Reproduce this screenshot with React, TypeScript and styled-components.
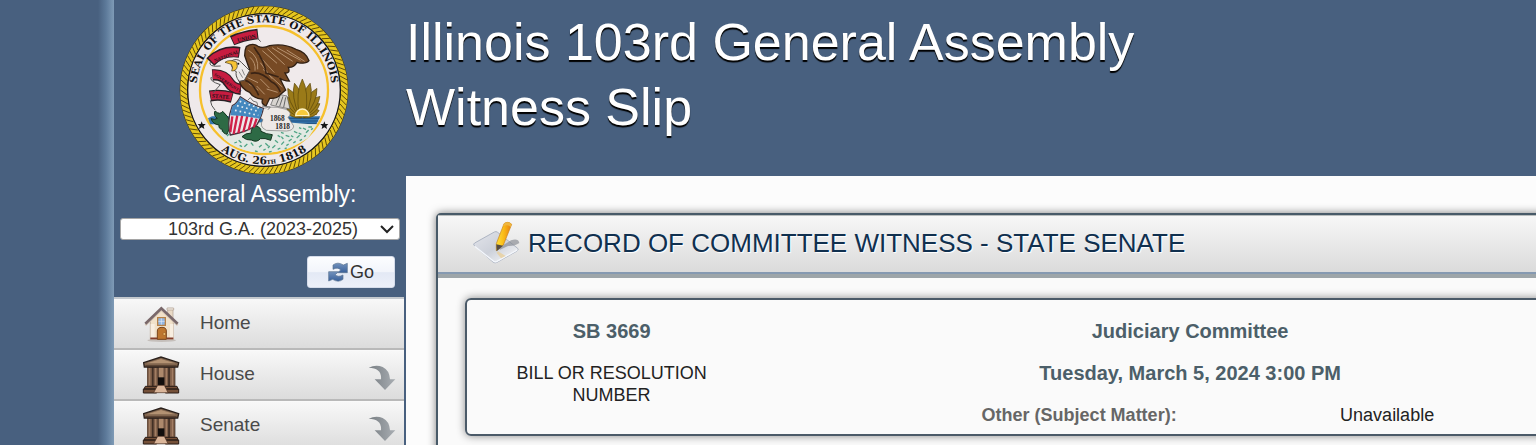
import React from "react";
import styled, { createGlobalStyle } from "styled-components";

const GlobalStyle = createGlobalStyle`
  *, *::before, *::after { box-sizing: border-box; }
  body {
    margin: 0;
    background: #48607f;
    color: #222;
    font-family: "Liberation Sans", Arial, sans-serif;
    font-size: 18px;
    line-height: 22px;
  }
`;

const Page = styled.div`
  display: flex;
  height: 100vh;
  overflow: hidden;
`;

const Gutter = styled.div`
  flex: 0 0 114px;
  background: linear-gradient(to right, #48607f 86%, #5d7a9a 93%, #7f9bb6 100%);
`;

const Sidebar = styled.aside`
  flex: 0 0 292px;
  display: flex;
  flex-direction: column;
`;

const SealLink = styled.a`
  display: flex;
  justify-content: center;
  padding: 5px 0 0 8px;
`;

const SessionForm = styled.form`
  display: flex;
  flex-direction: column;
  padding: 5px 6px 9px;
`;

const SessionLabel = styled.label`
  color: #fff;
  font-size: 23px;
  line-height: 28px;
  text-align: center;
`;

const SelectWrap = styled.div`
  display: grid;
  align-items: center;
  margin-top: 10px;
  > * { grid-area: 1 / 1; }
  > svg { justify-self: end; margin-right: 5px; pointer-events: none; }
`;

const SessionSelect = styled.select`
  width: 100%;
  height: 22px;
  padding: 0 12px 0 18px;
  border: 1px solid #a5a5a5;
  border-radius: 3px;
  appearance: none;
  background: #fff;
  color: #333;
  font: inherit;
  line-height: 20px;
  text-align: center;
  text-align-last: center;
`;

const GoButton = styled.button`
  display: flex;
  align-items: center;
  align-self: flex-end;
  justify-content: center;
  gap: 2px;
  width: 88px;
  height: 32px;
  margin: 16px 5px 0 0;
  padding: 0;
  border: 1px solid #d5dcea;
  border-radius: 3px;
  background: linear-gradient(#fcfdff, #f2f5fb 50%, #e3e9f5 52%, #ecf0f9);
  color: #333;
  font: inherit;
`;

const Menu = styled.nav`
  display: flex;
  flex-direction: column;
  margin-right: 2px;
`;

const MenuLink = styled.a`
  display: flex;
  flex: none;
  align-items: center;
  height: 51px;
  padding: 0 8px 0 28px;
  border-top: 1px solid #fafafa;
  border-bottom: 2px solid #b9b9b9;
  background: linear-gradient(#f8f8f8, #dcdcdc);
  color: #4a4a4a;
  font-size: 19px;
  text-decoration: none;
  &:first-child { height: 53px; border-top: 2px solid #c4c9ce; }
`;

const MenuText = styled.span`
  flex: 1;
  margin-left: 20px;
  padding-bottom: 2px;
`;

const Main = styled.main`
  display: flex;
  flex: 1;
  flex-direction: column;
  min-width: 0;
`;

const Banner = styled.header`
  flex: none;
  height: 176px;
  padding-top: 10px;
`;

const Title = styled.h1`
  margin: 0;
  color: #fff;
  font-size: 52px;
  font-weight: 400;
  line-height: 65px;
  text-shadow: 0 2px 1px #000;
`;

const Content = styled.div`
  flex: 1;
  min-height: 300px;
  padding: 37px 0 0 30px;
  background: #fcfcfc;
`;

const Panel = styled.section`
  min-height: 400px;
  margin-right: -120px;
  border: 2px solid #485a68;
  border-radius: 5px;
  background: #fafafa;
  box-shadow: 0 0 8px rgba(0, 0, 0, 0.5);
`;

const PanelHeader = styled.div`
  display: flex;
  align-items: center;
  gap: 8px;
  height: 63px;
  padding: 0 35px 5px;
  border-top: 1px solid #b9bdbd;
  border-bottom: 4px solid #9da5a9;
  background: linear-gradient(#f7f7f7, #dadada);
  box-shadow: inset 0 -2px 0 #8599b1;
`;

const PanelTitle = styled.h2`
  margin: 0;
  color: #10304f;
  font-size: 26px;
  font-weight: 400;
  line-height: 32px;
  text-shadow: 1px 1px 1px #fff;
`;

const BillCard = styled.div`
  display: grid;
  grid-template-columns: 1fr 3fr;
  margin: 20px 28px 0 27px;
  min-height: 138px;
  padding: 20px 0 8px;
  border: 2px solid #4b5a68;
  border-radius: 6px;
  box-shadow: 0 0 8px rgba(0, 0, 0, 0.45);
  text-align: center;
`;

const Column = styled.div`
  display: flex;
  flex-direction: column;
  align-items: center;
  gap: 20px;
`;

const Strong = styled.h3`
  margin: 0;
  color: #4c5f69;
  font-size: 20px;
  line-height: 22px;
`;

const Caption = styled.p`
  width: 200px;
  margin: 0;
`;

const Hearing = styled.dl`
  display: grid;
  grid-template-columns: 308px 308px;
  margin: 0 0 0 86px;
`;

const HearingTerm = styled.dt`
  color: #666;
  font-weight: 700;
`;

const HearingValue = styled.dd`
  margin: 0;
`;

const CX = 285;
const CY = 269;

const ropeStrands = Array.from({ length: 104 }, (_, i) => {
  const a = (i / 104) * Math.PI * 2;
  const b = a + 0.06;
  return `M${CX + 232 * Math.cos(a)} ${CY + 232 * Math.sin(a)}L${CX + 251 * Math.cos(b)} ${CY + 251 * Math.sin(b)}`;
}).join("");

const leaves: [number, number][] = [
  [-76, 52], [76, 52], [-58, 62], [58, 62], [-44, 76], [44, 76],
  [-29, 90], [29, 90], [-14, 97], [14, 97], [0, 107],
];

const StateSeal = () => (
  <svg width="170" height="170" viewBox="30 14 510 510" role="img" aria-label="Seal of the State of Illinois">
    <defs>
      <path id="seal-top" d="M82 290V269A203 203 0 0 1 488 269V290" />
      <path id="seal-bottom" d="M62 269A223 223 0 0 0 508 269" />
    </defs>
    <circle cx={CX} cy={CY} r="253" fill="#40370f" />
    <circle cx={CX} cy={CY} r="241" fill="none" stroke="#e6c61f" strokeWidth="21" />
    <path d={ropeStrands} stroke="#5e4c08" strokeWidth="3" />
    <circle cx={CX} cy={CY} r="229" fill="#efe9ea" stroke="#171717" strokeWidth="4" />
    <circle cx={CX} cy={CY} r="192" fill="#f0eaeb" stroke="#f6c02c" strokeWidth="7" />
    <g fill="#111" fontFamily="'DejaVu Serif', serif" fontWeight="700" textAnchor="middle">
      <text fontSize="31"><textPath href="#seal-top" startOffset="50%">SEAL OF THE STATE OF ILLINOIS</textPath></text>
      <text fontSize="32"><textPath href="#seal-bottom" startOffset="50%">AUG. 26<tspan fontSize="17">TH</tspan> 1818</textPath></text>
    </g>
    <g fill="#151515">
      <path d="M98 363l3 8 9 0-6 6 2 9-8-5-8 5 2-9-6-6 9 0z" />
      <path d="M466 363l3 8 9 0-6 6 2 9-8-5-8 5 2-9-6-6 9 0z" />
    </g>

    <path d="M117 354l12-6h325l-12 24H124z" fill="#3576ae" />
    <path d="M352 354h99M350 362h98M351 369h92" stroke="#153f69" strokeWidth="2" />
    <path d="M358 344Q350 300 400 262Q452 300 443 344z" fill="#8a6c14" />
    <g transform="translate(400 343)" fill="#9a7a18" stroke="#5c4809" strokeWidth="2">
      {leaves.map(([angle, length]) => (
        <path
          key={angle}
          d={`M-10 0Q-20 ${-length * 0.65} 0 ${-length}Q20 ${-length * 0.65} 10 0z`}
          transform={`rotate(${angle})`}
        />
      ))}
    </g>
    <path d="M380 346a20 20 0 0 1 40 0z" fill="#f7ca3c" stroke="#fff3c2" strokeWidth="4" />

    <path d="M137 375Q285 358 444 373L418 412Q354 457 284 457Q205 455 166 417z" fill="#e2e9e3" />
    <path d="M158 390l7 5M174 407l6-6M209 420l8 7M226 439l9-8M246 427l7 9M270 441l8-7M289 429l9 8M310 443l9-8M318 420l9 7M337 433l8-9M350 405l11 4M359 423l9-7M375 393l10 5M383 413l9-8M402 383l9 5M411 397l8-8M418 380l11 0M300 455l8-2M258 452l8 2M343 416l-6-7M397 402l-8-4M366 406l7 4M326 447l8-4M196 428l8-3M212 435l7 4M283 450l7-4M297 443l5-6M326 405l8 5M336 396l8 3M352 436l7-5M373 428l7-5M392 421l7-4M390 382l7 3M405 409l6-4M426 388l6-4M347 445l6-2" stroke="#4fa485" strokeWidth="4" fill="none" />

    <path d="M255 337Q296 309 351 327Q373 338 357 351L374 377Q373 391 352 392L292 390Q268 379 282 358z" fill="#eee9e7" stroke="#777" strokeWidth="2" />
    <g fill="#252525" fontFamily="'Liberation Serif', serif" fontSize="22" fontWeight="700">
      <text x="303" y="363">1868</text>
      <text x="319" y="386">1818</text>
    </g>

    <path d="M174 402Q160 399 160 387Q148 386 150 374Q132 372 126 355Q138 360 145 354Q132 344 138 332Q153 345 161 333Q179 348 187 371z" fill="#2d6a45" stroke="#133520" strokeWidth="3" />
    <path d="M219 409Q229 398 247 398Q243 386 260 377Q276 380 276 393Q292 402 310 403L305 420Q287 412 274 415Q264 428 247 419Q232 421 219 409z" fill="#2d6a45" stroke="#133520" strokeWidth="3" />

    <g fill="none" strokeLinejoin="round">
      <path d="M189 121Q222 106 267 101" stroke="#282025" strokeWidth="31" />
      <path d="M192 121Q224 107 264 102" stroke="#c71c40" strokeWidth="23" />
      <path d="M124 185Q159 148 212 156" stroke="#282025" strokeWidth="33" />
      <path d="M127 182Q162 150 209 157" stroke="#c71c40" strokeWidth="25" />
      <path d="M130 224Q165 221 180 247Q191 265 216 267" stroke="#282025" strokeWidth="34" />
      <path d="M131 223Q166 221 181 247Q192 265 214 266" stroke="#c71c40" strokeWidth="26" />
      <path d="M123 287Q153 281 190 291" stroke="#282025" strokeWidth="33" />
      <path d="M125 286Q154 281 188 290" stroke="#c71c40" strokeWidth="25" />
      <path d="M124 184Q116 201 155 197M127 230Q119 242 154 253L132 278M124 300Q126 317 138 329M264 112L275 124" stroke="#555" strokeWidth="3" />
    </g>
    <g fill="#24141b" fontFamily="'Liberation Serif', serif" fontWeight="700" fontSize="17">
      <text transform="translate(206 126) rotate(-14)">UNION</text>
      <text fontSize="15" transform="translate(137 186) rotate(-21)">NATIONAL</text>
      <text fontSize="13" transform="translate(134 225) rotate(34)">SOVEREIGNTY</text>
      <text transform="translate(128 292) rotate(4)">STATE</text>
    </g>

    <path d="M319 280L354 287L363 326L305 314z" fill="#d8d4d0" stroke="#555" strokeWidth="2" />
    <path d="M321 315L333 286M332 318L342 288M344 321L350 291" stroke="#666" strokeWidth="3" />
    <path d="M232 139Q251 126 267 138Q282 145 302 136Q345 128 381 147Q411 155 420 181Q411 193 384 186Q375 202 358 201Q365 220 348 218L361 242Q343 242 332 233L350 269L335 282Q323 296 302 294L291 317Q275 311 281 297Q252 294 242 276Q216 265 211 242L214 221L242 208L227 166Q227 149 232 139z" fill="#774a24" stroke="#302014" strokeWidth="4" />
    <path d="M238 150Q270 168 266 207M243 171Q261 187 258 211M280 151L324 189M295 145L347 193M309 142L371 183M324 142L395 180M353 149L407 183M269 165L316 217M274 187L309 235M282 207L340 260M236 232L267 247M239 250L268 270M274 236L301 263M263 257L287 282M293 266L326 276" fill="none" stroke="#b7926f" strokeWidth="3" />
    <path d="M255 141Q288 184 291 218L329 230M245 219Q276 211 307 244Q325 251 334 275M229 240Q252 247 269 285" fill="none" stroke="#3b2415" strokeWidth="5" />
    <path d="M184 184Q203 170 217 186Q233 202 242 211L226 240L210 243Q198 225 202 214Q190 211 184 184z" fill="#eee9e7" stroke="#514e4b" strokeWidth="3" />
    <path d="M203 185Q180 176 168 186L187 192Q194 199 188 212Q203 212 205 198z" fill="#f6c333" stroke="#463617" strokeWidth="2" />
    <circle cx="208" cy="190" r="3" fill="#151515" />
    <path d="M210 214L221 232M219 207L227 225" stroke="#888" strokeWidth="3" />

    <path d="M214 289Q247 313 283 324Q279 346 264 373Q239 394 184 404Q172 360 190 316Q205 308 214 289z" fill="#eee8eb" stroke="#46353e" strokeWidth="4" />
    <path d="M190 348L184 395M205 345L194 401M220 344L208 399M235 347L223 395M249 351L239 389M263 355L254 381" stroke="#d02149" strokeWidth="7" />
    <path d="M214 291Q247 315 281 325Q279 340 272 355Q227 346 184 345Q185 330 191 317Q206 309 214 291z" fill="#4488bf" />
    <path d="M198 330L268 345M204 316L272 334M212 303L272 324" stroke="#e5edf2" strokeWidth="5" strokeDasharray="5 9" />
    <path d="M236 300l8-8 8 10 12 4 2 12M279 317l25 3-7 8" stroke="#777" strokeWidth="3" fill="none" />
  </svg>
);

const RefreshIcon = () => (
  <svg width="20" height="20" viewBox="0 0 60 60" aria-hidden="true">
    <defs>
      <linearGradient id="sync" x1="0" y1="0" x2="0" y2="1">
        <stop offset="0" stopColor="#7392bd" /><stop offset="1" stopColor="#38609a" />
      </linearGradient>
    </defs>
    <path d="M15 9Q29-2 46 9L58 4V32H29L38 24Q30 14 15 22z" fill="url(#sync)" stroke="#5b7290" strokeWidth="2" />
    <path d="M45 52Q31 63 14 52L2 57V29H31L22 38Q30 47 45 39z" fill="url(#sync)" stroke="#5b7290" strokeWidth="2" />
  </svg>
);

const ChevronIcon = () => (
  <svg width="16" height="12" viewBox="0 0 16 12" aria-hidden="true">
    <path d="M2 3l6 6 6-6" fill="none" stroke="#222" strokeWidth="2" />
  </svg>
);

const HomeIcon = () => (
  <svg width="38" height="38" viewBox="0 0 114 114" aria-hidden="true">
    <ellipse cx="59" cy="106" rx="43" ry="5" fill="#c5bfbb" />
    <path d="M77 10h16v40H77z" fill="#e9dac6" stroke="#b09f90" strokeWidth="2" />
    <path d="M75 9h20v6H75z" fill="#f4eee4" stroke="#b09f90" strokeWidth="2" />
    <path d="M25 49L58 15L94 50V103H25z" fill="#f1e1c9" stroke="#b09a83" strokeWidth="2" />
    <path d="M26 57h12v45H26M84 57h10v45H84" fill="#f8eee0" />
    <path d="M25 100h22M74 100h20" stroke="#843f2c" strokeWidth="5" />
    <path d="M10 61L58 15L107 61" fill="none" stroke="#d8c8b8" strokeWidth="6" />
    <path d="M10 56L58 10L107 56" fill="none" stroke="#79686a" strokeWidth="8" />
    <path d="M47 38h23v23H47z" fill="#91b7e5" stroke="#b88247" strokeWidth="4" />
    <path d="M58 40v19M49 49h19" stroke="#e7edf5" strokeWidth="2" />
    <path d="M46 103V78Q46 67 60 67Q73 67 73 78V103z" fill="#bd762e" stroke="#79441a" strokeWidth="3" />
    <circle cx="67" cy="87" r="4" fill="#f1be6b" stroke="#6b3d19" />
  </svg>
);

const CapitolIcon = () => (
  <svg width="38" height="38" viewBox="0 0 114 114" aria-hidden="true">
    <path d="M17 30h80v64H17z" fill="#49352b" stroke="#241c19" strokeWidth="3" />
    <path d="M16 33h15v60H16M35 33h13v60H35M67 33h13v60H67M84 33h15v60H84" fill="#80604a" stroke="#2e211b" strokeWidth="2" />
    <path d="M23 36v52M41 36v52M73 36v52M91 36v52" stroke="#a98469" strokeWidth="3" />
    <path d="M50 33h15v39H50z" fill="#ad896c" />
    <path d="M48 64h19v24H48z" fill="#120e0d" />
    <path d="M5 20L57 3L110 20L107 33H7z" fill="#81654e" stroke="#2b211c" strokeWidth="4" />
    <path d="M14 22L57 9L100 22z" fill="#b39273" />
    <path d="M10 30h94" stroke="#483428" strokeWidth="4" />
    <path d="M10 91h35v8H6zM69 91h36l3 8H70zM4 99h40v12H4zM70 99h40v12H70z" fill="#755038" stroke="#2b1d17" strokeWidth="3" />
    <path d="M47 88h20l11 22H35z" fill="#dbb69a" stroke="#4b3022" strokeWidth="2" />
  </svg>
);

const ExpandArrow = () => (
  <svg width="28" height="26" viewBox="0 0 84 78" aria-hidden="true">
    <defs>
      <linearGradient id="expand"><stop offset="0" stopColor="#777d82" /><stop offset="1" stopColor="#a9aeb3" /></linearGradient>
    </defs>
    <path d="M2 8Q24-3 44 6Q64 15 66 43H82L51 75L20 43H39Q42 9 2 8z" fill="url(#expand)" />
  </svg>
);

const WriteIcon = () => (
  <svg width="47" height="44" viewBox="0 0 141 132" aria-hidden="true">
    <defs>
      <linearGradient id="sheet" x2="1" y2="1"><stop offset="0" stopColor="#e3e5eb" /><stop offset=".5" stopColor="#cdd1da" /><stop offset="1" stopColor="#fff" /></linearGradient>
      <linearGradient id="pencil"><stop offset="0" stopColor="#ffe03c" /><stop offset=".5" stopColor="#f9b916" /><stop offset="1" stopColor="#e57a14" /></linearGradient>
    </defs>
    <path d="M3 73Q0 69 5 66L64 33Q69 30 74 34L134 82Q138 86 132 90L72 124Q66 127 61 124z" fill="url(#sheet)" stroke="#aeb5c3" strokeWidth="3" />
    <path d="M5 76L62 121Q66 124 72 121L133 87" fill="none" stroke="#f4f7fc" strokeWidth="4" />
    <path d="M76 81L114 58Q136 51 139 66Q125 76 105 75L81 86z" fill="#858890" opacity=".65" />
    <path d="M75 91L98 105L84 112L71 95z" fill="#e8cf9c" opacity=".8" />
    <path d="M70 68L93 8Q105-1 116 10L91 72L70 89z" fill="url(#pencil)" stroke="#c98116" strokeWidth="2" />
    <path d="M93 8Q105-1 116 10L113 18Q103 9 90 16z" fill="#efb63f" />
    <path d="M70 70L90 74L71 91z" fill="#554c43" />
  </svg>
);

const ArrowSlot = styled.span`
  display: flex;
  padding-top: 6px;
`;

const menu = [
  { label: "Home", icon: <HomeIcon />, expandable: false },
  { label: "House", icon: <CapitolIcon />, expandable: true },
  { label: "Senate", icon: <CapitolIcon />, expandable: true },
];

export default function App() {
  return (
    <>
      <GlobalStyle />
      <Page>
        <Gutter />
        <Sidebar>
          <SealLink href="#"><StateSeal /></SealLink>
          <SessionForm onSubmit={(e) => e.preventDefault()}>
            <SessionLabel htmlFor="session">General Assembly:</SessionLabel>
            <SelectWrap>
              <SessionSelect id="session" defaultValue="103">
                <option value="103">103rd G.A. (2023-2025)</option>
              </SessionSelect>
              <ChevronIcon />
            </SelectWrap>
            <GoButton type="submit"><RefreshIcon />Go</GoButton>
          </SessionForm>
          <Menu>
            {menu.map(({ label, icon, expandable }) => (
              <MenuLink href="#" key={label}>
                {icon}
                <MenuText>{label}</MenuText>
                {expandable && <ArrowSlot><ExpandArrow /></ArrowSlot>}
              </MenuLink>
            ))}
          </Menu>
        </Sidebar>
        <Main>
          <Banner>
            <Title>Illinois 103rd General Assembly<br />Witness Slip</Title>
          </Banner>
          <Content>
            <Panel>
              <PanelHeader>
                <WriteIcon />
                <PanelTitle>RECORD OF COMMITTEE WITNESS - STATE SENATE</PanelTitle>
              </PanelHeader>
              <BillCard>
                <Column>
                  <Strong>SB 3669</Strong>
                  <Caption>BILL OR RESOLUTION NUMBER</Caption>
                </Column>
                <Column>
                  <Strong>Judiciary Committee</Strong>
                  <Strong>Tuesday, March 5, 2024 3:00 PM</Strong>
                  <Hearing>
                    <HearingTerm>Other (Subject Matter):</HearingTerm>
                    <HearingValue>Unavailable</HearingValue>
                  </Hearing>
                </Column>
              </BillCard>
            </Panel>
          </Content>
        </Main>
      </Page>
    </>
  );
}
